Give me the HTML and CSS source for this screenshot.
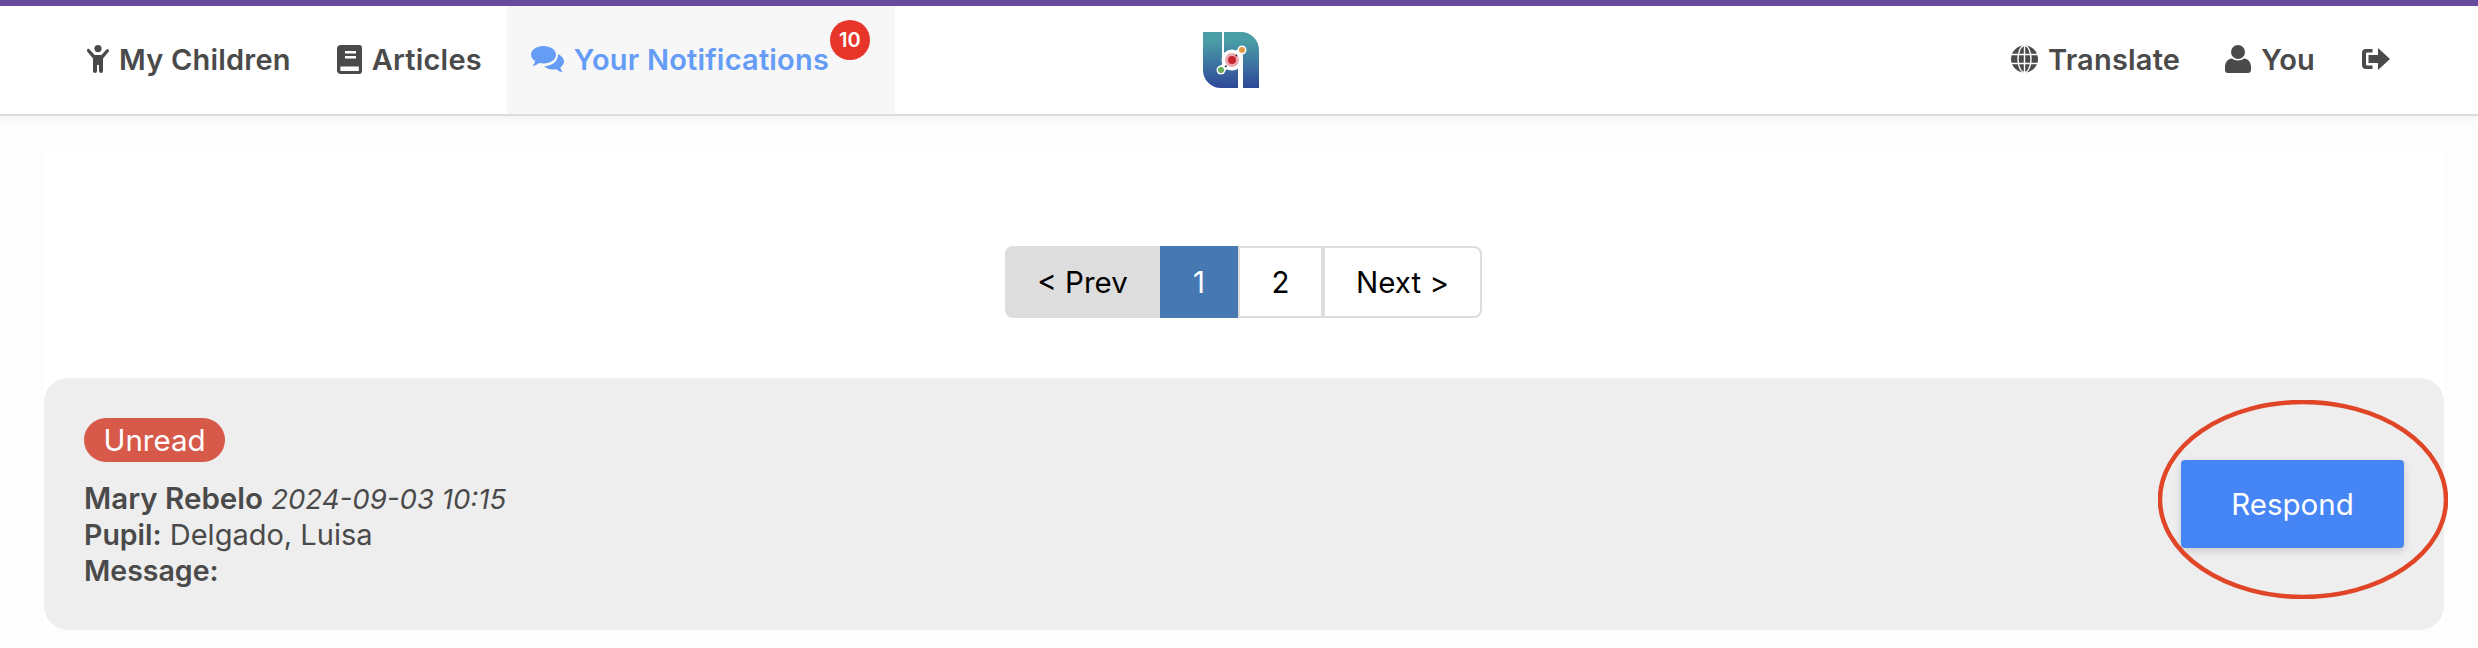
FILE: index.html
```html
<!DOCTYPE html>
<html lang="en">
<head>
    <meta charset="UTF-8">
    <title>Your Notifications</title>
    <link rel="stylesheet" href="styles.css">
</head>
<body>
    <header class="topbar">
        <nav class="menu menu-left">
            <a class="item item-child" href="#">
                <svg class="icon" width="22" height="28" viewBox="0 0 22 28"><circle cx="11" cy="3.6" r="3.6"/><path d="M.4 4.2a1.6 1.6 0 0 1 2.2.2L7.6 10h6.8l5-5.6a1.6 1.6 0 0 1 2.4 2L16 13.4V26a2 2 0 0 1-4 0v-6h-2v6a2 2 0 0 1-4 0V13.4L.2 6.4a1.6 1.6 0 0 1 .2-2.2z"/></svg>
                My Children
            </a>
            <a class="item item-book" href="#">
                <svg class="icon" width="25" height="29" viewBox="0 0 25 29"><path d="M4 0h18a3 3 0 0 1 3 3v23a3 3 0 0 1-3 3H4a4 4 0 0 1-4-4V4a4 4 0 0 1 4-4z"/><path fill="#fff" d="M8 6h11v2.4H8zM8 11h11v2.4H8zM3.4 21.5h18.4v4.4H3.4z"/></svg>
                Articles
            </a>
            <a class="item item-active" href="#">
                <svg class="icon" width="33" height="26" viewBox="0 0 33 26"><path d="M12.5 0C19.4 0 25 3.9 25 8.8s-5.600 8.800-12.500 8.800c-1.500 0-2.900-.2-4.200-.5C6.500 18.500 4 19.800 1.500 20c1-1.200 2.200-2.900 2.700-5C1.600 13.500 0 11.300 0 8.800 0 3.900 5.600 0 12.500 0z"/><path d="M27 8.200c3.500 1.500 6 4.200 6 7.300 0 2.400-1.400 4.500-3.700 6 .4 1.800 1.400 3.300 2.400 4.500-2.400-.2-4.700-1.300-6.400-2.800-1 .2-2.100.3-3.300.3-3.600 0-6.800-1.300-8.800-3.300 7.400-.3 14-4.700 13.800-12z"/></svg>
                Your Notifications
                <span class="badge">10</span>
            </a>
        </nav>
        <svg class="logo" width="56" height="56" viewBox="0 0 56 56">
            <defs>
                <linearGradient id="logo-fill" gradientUnits="userSpaceOnUse" x1="0" y1="0" x2="0" y2="56">
                    <stop offset="0.15" stop-color="#4a9ea6"/>
                    <stop offset="1" stop-color="#2f4899"/>
                </linearGradient>
            </defs>
            <path fill="url(#logo-fill)" d="M0 0H19V30H35V56H18A18 18 0 0 1 0 38Z"/>
            <path fill="url(#logo-fill)" d="M21 0H38A18 18 0 0 1 56 18V56H40V23H21Z"/>
            <path stroke="#fff" stroke-width="7" d="M18 38L39 18"/>
            <circle cx="29" cy="28" r="10.500" fill="#fff"/>
            <circle cx="29" cy="28" r="7" fill="#eba9b0"/>
            <circle cx="29" cy="28" r="4" fill="#c9252f"/>
            <circle cx="18" cy="38" r="4.500" fill="#fff"/>
            <circle cx="18" cy="38" r="3" fill="#66ad5c"/>
            <circle cx="39" cy="18" r="4.500" fill="#fff"/>
            <circle cx="39" cy="18" r="3" fill="#e59a48"/>
            <path stroke="#333" stroke-width="1.500" d="M23.600 33.600l-1.400 1.400M34 22.800l-1.400 1.400"/>
        </svg>
        <nav class="menu menu-right">
            <a class="item item-globe" href="#">
                <svg class="icon" width="27" height="28" viewBox="0 0 27 28"><circle cx="13.500" cy="14" r="13.500"/><g fill="none" stroke="#fff" stroke-width="1.400"><ellipse cx="13.500" cy="14" rx="6.500" ry="13.500"/><path d="M0 9.500h27M0 18.500h27M13.500 0v28"/></g></svg>
                Translate
            </a>
            <a class="item item-you" href="#">
                <svg class="icon" width="26" height="28" viewBox="0 0 26 28"><circle cx="13" cy="7" r="7"/><path d="M7 13.500c1.500 1.300 3.700 2 6 2s4.500-.7 6-2c4 .5 7 3.500 7 8.500v3a3 3 0 0 1-3 3H3a3 3 0 0 1-3-3v-3c0-5 3-8 7-8.500z"/></svg>
                You
            </a>
            <a class="item item-out" href="#">
                <svg class="icon" width="28" height="22" viewBox="0 0 28 22"><path d="M4 1h6.500v3.500H5a1 1 0 0 0-1 1v11a1 1 0 0 0 1 1h5.500V21H4a4 4 0 0 1-4-4V5a4 4 0 0 1 4-4z"/><path d="M16 0l12 11-12 11v-7H6.500V7H16z"/></svg>
            </a>
        </nav>
    </header>

    <main class="contenido">
        <div class="paginas">
            <a class="pagina pagina-prev" href="#">&lt; Prev</a>
            <a class="pagina pagina-actual" href="#">1</a>
            <a class="pagina pagina-dos" href="#">2</a>
            <a class="pagina pagina-next" href="#">Next &gt;</a>
        </div>

        <section class="aviso">
            <div class="aviso-texto">
                <span class="etiqueta">Unread</span>
                <p><b class="nombre">Mary Rebelo</b> <i>2024-09-03 10:15</i></p>
                <p><b>Pupil:</b> Delgado, Luisa</p>
                <p><b>Message:</b></p>
            </div>
            <a class="responder" href="#">Respond</a>
            <!-- circulo rojo de la captura -->
            <svg class="marca" width="290" height="199" viewBox="0 0 290 199"><ellipse cx="145" cy="99.500" rx="143" ry="97.500"/></svg>
        </section>
    </main>
</body>
</html>
```

FILE: styles.css
```css
body {
    margin: 0;
    background: #fdfdfd;
    color: #4a4a4a;
    font-family: Inter, "Open Sans", sans-serif;
}
a {
    color: inherit;
    text-decoration: none;
}
.topbar {
    display: grid;
    grid-template-columns: 1fr auto 1fr;
    align-items: center;
    height: 108px;
    padding: 0 72px 0 71px;
    background: white;
    border-top: 6px solid #6a4a9d;
    box-shadow: 0 2px 0 #dcdcdc, 0 4px 10px rgba(0, 0, 0, 0.05);
}
.logo {
    margin-right: 15px;
}
.menu {
    display: flex;
    align-items: center;
    height: 100%;
}
.menu-right {
    justify-content: flex-end;
}
.item {
    position: relative;
    display: flex;
    align-items: center;
    gap: 10px;
    box-sizing: border-box;
    height: 100%;
    padding: 0 16px 2px;
    font-size: 29px;
    font-weight: 600;
    letter-spacing: 0.2px;
}
.icon {
    fill: currentColor;
    flex: none;
}
.item-book {
    margin-left: 14px;
}
.item-active {
    width: 388px;
    margin-left: 9px;
    padding-left: 24px;
    background: #f7f7f7;
    color: #659cf5;
}
.item-you {
    margin-left: 13px;
}
.item-out {
    margin-left: 15px;
}
.badge {
    position: absolute;
    top: 14px;
    left: 323px;
    width: 40px;
    height: 40px;
    line-height: 40px;
    border-radius: 50%;
    background: #e8352a;
    color: white;
    font-size: 20px;
    font-weight: 600;
    letter-spacing: 0;
    text-align: center;
}
.contenido {
    margin: 32px 34px 0 44px;
    padding-top: 100px;
    background: white;
    border-radius: 6px;
}
.paginas {
    display: flex;
    justify-content: center;
    height: 72px;
    padding-right: 1px;
    font-size: 29.5px;
    color: black;
}
.pagina {
    display: flex;
    align-items: center;
    justify-content: center;
    box-sizing: border-box;
    border: 2px solid #ddd;
    background: white;
}
.pagina-prev {
    width: 155px;
    background: #ddd;
    border-radius: 8px 0 0 8px;
}
.pagina-actual {
    width: 78px;
    background: #4678b2;
    border-color: #4678b2;
    color: white;
}
.pagina-dos {
    width: 85px;
}
.pagina-next {
    width: 159px;
    border-radius: 0 8px 8px 0;
}
.aviso {
    position: relative;
    display: flex;
    align-items: center;
    justify-content: space-between;
    margin-top: 60px;
    padding: 40px;
    background: #eeeeee;
    border-radius: 24px;
    font-size: 29px;
    line-height: 36px;
}
.aviso-texto {
    padding-bottom: 1px;
}
.aviso p {
    margin: 0;
}
.aviso b {
    font-size: 28.5px;
    font-weight: 600;
    line-height: 1;
}
.aviso b.nombre {
    font-size: 29.5px;
}
.aviso i {
    font-size: 27.6px;
    line-height: 1;
}
.etiqueta {
    display: block;
    width: 141px;
    height: 44px;
    line-height: 44px;
    margin-bottom: 19px;
    border-radius: 22px;
    background: #d6594a;
    color: white;
    font-size: 29.5px;
    text-align: center;
}
.responder {
    display: flex;
    align-items: center;
    justify-content: center;
    width: 223px;
    height: 88px;
    background: #4585f5;
    border-radius: 4px;
    box-shadow: 0 3px 8px rgba(0, 0, 0, 0.15);
    color: white;
    font-size: 29.5px;
}
.marca {
    position: absolute;
    top: 22px;
    right: -4px;
    fill: none;
    stroke: #e04528;
    stroke-width: 4.5;
}
```
